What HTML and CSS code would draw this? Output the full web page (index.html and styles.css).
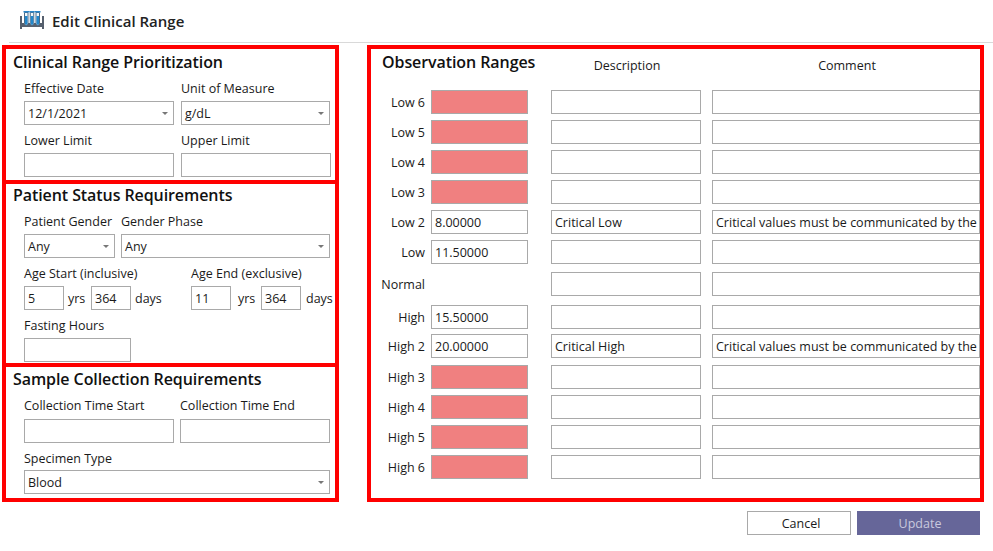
FILE: index.html
```html
<!DOCTYPE html>
<html lang="en">
<head>
<meta charset="utf-8">
<title>Edit Clinical Range</title>
<link rel="stylesheet" href="styles.css">
</head>
<body>
<header class="topbar">
  <svg class="logo" width="24" height="18" viewBox="0 0 24 18">
    <path d="M0 5h2v8h20V5h2v13h-2v-2H2v2H0z" fill="#56606e"/>
    <path d="M2 12h20v3H2z" fill="#56606e"/>
    <g fill="#f2f8fc" stroke="#4a6b88" stroke-width="1">
      <path d="M4.500 1.500h3.500v11a1.750 1.750 0 0 1-3.500 0z"/>
      <path d="M10.250 1.500h3.500v11a1.750 1.750 0 0 1-3.500 0z"/>
      <path d="M16 1.500h3.500v11a1.750 1.750 0 0 1-3.500 0z"/>
    </g>
    <g fill="#2288cc">
      <path d="M5 5h2.500v7.500a1.250 1.250 0 0 1-2.500 0z"/>
      <path d="M10.750 5h2.500v7.500a1.250 1.250 0 0 1-2.500 0z"/>
      <path d="M16.500 5h2.500v7.500a1.250 1.250 0 0 1-2.500 0z"/>
    </g>
    <path d="M3.500 0h5.500v1.500H3.500zM9.250 0h5.500v1.500h-5.500zM15 0h5.500v1.500H15z" fill="#2a86c8"/>
  </svg>
  <h1 class="page-title">Edit Clinical Range</h1>
</header>

<main class="content">
  <div class="left-col">
    <section class="panel panel-priority">
      <h2 class="panel-title">Clinical Range Prioritization</h2>
      <div class="row row-a">
        <div class="col w150"><label class="lbl">Effective Date</label><div class="field select">12/1/2021</div></div>
        <div class="col w149"><label class="lbl">Unit of Measure</label><div class="field select">g/dL</div></div>
      </div>
      <div class="row row-b">
        <div class="col w150"><label class="lbl">Lower Limit</label><div class="field"></div></div>
        <div class="col w150"><label class="lbl">Upper Limit</label><div class="field"></div></div>
      </div>
    </section>

    <section class="panel panel-status">
      <h2 class="panel-title">Patient Status Requirements</h2>
      <div class="row row-gender">
        <div class="col w91"><label class="lbl">Patient Gender</label><div class="field select">Any</div></div>
        <div class="col w209"><label class="lbl">Gender Phase</label><div class="field select">Any</div></div>
      </div>
      <div class="row row-age">
        <div class="col age-start">
          <label class="lbl">Age Start (inclusive)</label>
          <div class="age-line">
            <div class="field w40">5</div><span class="unit unit-yrs">yrs</span>
            <div class="field w40">364</div><span class="unit">days</span>
          </div>
        </div>
        <div class="col age-end">
          <label class="lbl">Age End (exclusive)</label>
          <div class="age-line">
            <div class="field w40">11</div><span class="unit unit-yrs">yrs</span>
            <div class="field w40">364</div><span class="unit">days</span>
          </div>
        </div>
      </div>
      <div class="row row-fast">
        <div class="col w107"><label class="lbl">Fasting Hours</label><div class="field"></div></div>
      </div>
    </section>

    <section class="panel panel-sample">
      <h2 class="panel-title">Sample Collection Requirements</h2>
      <div class="row row-a">
        <div class="col w150"><label class="lbl">Collection Time Start</label><div class="field"></div></div>
        <div class="col w150"><label class="lbl">Collection Time End</label><div class="field"></div></div>
      </div>
      <div class="row row-specimen">
        <div class="col w306"><label class="lbl">Specimen Type</label><div class="field select">Blood</div></div>
      </div>
    </section>
  </div>

  <section class="panel obs">
    <div class="obs-head">
      <h2 class="panel-title obs-title">Observation Ranges</h2>
      <div class="head-desc">Description</div>
      <div class="head-comment">Comment</div>
    </div>
    <div class="obs-row"><span class="obs-label">Low 6</span><div class="field val off"></div><div class="field desc"></div><div class="field comment"></div></div>
    <div class="obs-row"><span class="obs-label">Low 5</span><div class="field val off"></div><div class="field desc"></div><div class="field comment"></div></div>
    <div class="obs-row"><span class="obs-label">Low 4</span><div class="field val off"></div><div class="field desc"></div><div class="field comment"></div></div>
    <div class="obs-row"><span class="obs-label">Low 3</span><div class="field val off"></div><div class="field desc"></div><div class="field comment"></div></div>
    <div class="obs-row"><span class="obs-label">Low 2</span><div class="field val">8.00000</div><div class="field desc">Critical Low</div><div class="field comment">Critical values must be communicated by the</div></div>
    <div class="obs-row"><span class="obs-label">Low</span><div class="field val">11.50000</div><div class="field desc"></div><div class="field comment"></div></div>
    <div class="obs-row obs-normal"><span class="obs-label">Normal</span><div class="val-gap"></div><div class="field desc"></div><div class="field comment"></div></div>
    <div class="obs-row obs-high"><span class="obs-label">High</span><div class="field val">15.50000</div><div class="field desc"></div><div class="field comment"></div></div>
    <div class="obs-row obs-high2"><span class="obs-label">High 2</span><div class="field val">20.00000</div><div class="field desc">Critical High</div><div class="field comment">Critical values must be communicated by the</div></div>
    <div class="obs-row obs-high3"><span class="obs-label">High 3</span><div class="field val off"></div><div class="field desc"></div><div class="field comment"></div></div>
    <div class="obs-row"><span class="obs-label">High 4</span><div class="field val off"></div><div class="field desc"></div><div class="field comment"></div></div>
    <div class="obs-row"><span class="obs-label">High 5</span><div class="field val off"></div><div class="field desc"></div><div class="field comment"></div></div>
    <div class="obs-row"><span class="obs-label">High 6</span><div class="field val off"></div><div class="field desc"></div><div class="field comment"></div></div>
  </section>
</main>

<footer class="actions">
  <button class="btn btn-cancel" type="button">Cancel</button>
  <button class="btn btn-update" type="button">Update</button>
</footer>
</body>
</html>
```
FILE: styles.css
```css
* { box-sizing: border-box; }
html, body { margin: 0; padding: 0; background: #fff; }
body {
  width: 993px;
  height: 551px;
  overflow: hidden;
  font-family: "Open Sans", "Noto Sans", sans-serif;
  font-size: 12.5px;
  color: #1a1a1a;
}

.topbar {
  height: 43px;
  margin-left: 9px;
  padding: 0 0 1px 11px;
  border-bottom: 1px solid #d9d9d9;
  display: flex;
  align-items: center;
  gap: 8px;
}
.logo { flex: none; margin-top: -1px; }
.page-title { margin: 0; font-size: 15px; font-weight: 600; color: #222; }

.content {
  margin-top: 2px;
  padding-left: 2px;
  display: flex;
  gap: 28px;
  align-items: flex-start;
}
.left-col { width: 337px; flex: none; }

.panel { border: 4px solid #f00; background: #fff; }
.panel-title {
  margin: 0;
  font-size: 16px;
  line-height: 20px;
  font-weight: 600;
  color: #111;
  letter-spacing: -0.08px;
}
.panel-priority { height: 139px; padding: 3px 0 0 7px; }
.panel-status { height: 183px; border-top: 0; padding: 1px 0 0 7px; }
.panel-sample { height: 135px; border-top: 0; padding: 2px 0 0 7px; }

.row { display: flex; padding-left: 11px; }
.col { display: flex; flex-direction: column; flex: none; }
.lbl { height: 18px; line-height: 18px; white-space: nowrap; }

.panel-priority .row-a { gap: 7px; margin-top: 8px; }
.panel-priority .row-a .col { gap: 3px; }
.panel-priority .row-b { gap: 7px; margin-top: 7px; }
.panel-priority .row-b .col { gap: 3px; }

.w150 { width: 150px; }
.w149 { width: 149px; }
.w91 { width: 91px; }
.w209 { width: 209px; }
.w107 { width: 107px; }
.w306 { width: 306px; }
.w40 { width: 40px; flex: none; }

.row-gender { gap: 6px; margin-top: 8px; }
.row-gender .col { gap: 3px; }
.row-age { margin-top: 7px; }
.row-age .col { gap: 3px; }
.age-start { width: 167px; }
.age-line { display: flex; align-items: center; }
.unit { margin-left: 4px; white-space: nowrap; }
.unit-yrs { width: 23px; flex: none; }
.age-end .unit { margin-left: 5px; }
.age-end .unit-yrs { margin-left: 7px; width: 23px; }
.row-fast { margin-top: 7px; }
.row-fast .col { gap: 3px; }

.panel-sample .row-a { gap: 6px; margin-top: 8px; }
.panel-sample .row-a .col { gap: 4px; }
.row-specimen { margin-top: 7px; }
.row-specimen .col { gap: 2px; }

.field {
  height: 24px;
  line-height: 23px;
  border: 1px solid #a9a9a9;
  padding: 0 3px;
  background: #fff;
  white-space: nowrap;
  overflow: hidden;
  color: #1a1a1a;
}
.select { position: relative; }
.select::after {
  content: "";
  position: absolute;
  right: 5px;
  top: 10px;
  border-left: 3.5px solid transparent;
  border-right: 3.5px solid transparent;
  border-top: 3.5px solid #777;
}

.obs { width: 617px; height: 457px; padding: 0 0 0 11px; flex: none; }
.obs-head { display: flex; height: 41px; align-items: flex-start; }
.obs-title { width: 158px; margin-top: 3px; flex: none; }
.head-desc { width: 150px; text-align: center; margin-left: 12px; margin-top: 8px; flex: none; }
.head-comment { width: 268px; text-align: center; margin-left: 11px; margin-top: 8px; flex: none; }

.obs-row { display: flex; align-items: center; height: 24px; margin-bottom: 6px; margin-left: -11px; width: 613px; }
.obs-normal { margin-top: 8px; margin-bottom: 9px; }
.obs-high { margin-bottom: 5px; }
.obs-high2 { margin-bottom: 7px; }
.obs-label { width: 54px; flex: none; text-align: right; white-space: nowrap; }
.val { width: 97px; flex: none; margin-left: 6px; }
.val-gap { width: 97px; flex: none; margin-left: 6px; }
.off { background: #f08080; }
.desc { width: 150px; flex: none; margin-left: 23px; }
.comment { width: 268px; flex: none; margin-left: 11px; }

.actions {
  display: flex;
  justify-content: flex-end;
  gap: 6px;
  margin-top: 9px;
  padding-right: 13px;
}
.btn {
  height: 24px;
  font: inherit;
  padding: 0;
  cursor: pointer;
}
.btn-cancel { width: 104px; padding-left: 4px; background: #fff; border: 1px solid #a9a9a9; color: #1a1a1a; }
.btn-update { width: 123px; padding-left: 3px; background: #666699; border: 0; color: #c9c9de; }
```
